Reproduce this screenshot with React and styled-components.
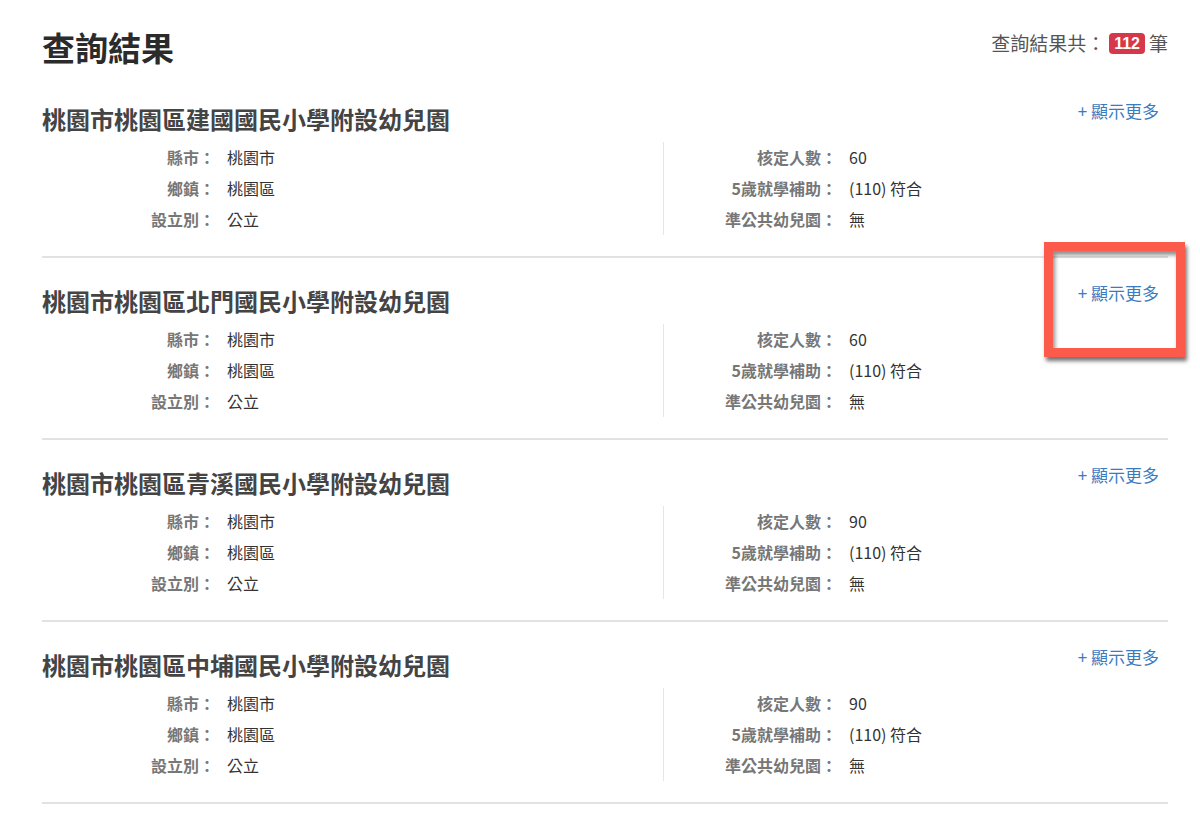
import React from "react";
import styled, { createGlobalStyle } from "styled-components";

const GlobalStyle = createGlobalStyle`
  html, body {
    margin: 0;
    padding: 0;
    background: #fff;
  }
  body {
    font-family: "Noto Sans CJK TC", "Noto Sans", "Liberation Sans", sans-serif;
    color: #333;
  }
`;

const Page = styled.div`
  padding: 0 32px 0 42px;
`;

const Header = styled.header`
  display: flex;
  justify-content: space-between;
  align-items: flex-start;
  padding: 25px 0 7px;
`;

const Heading = styled.h1`
  margin: 0;
  font-size: 33px;
  line-height: 44px;
  font-weight: 700;
  color: #2b2b2b;
`;

const Count = styled.div`
  display: flex;
  align-items: center;
  margin-top: 6px;
  font-size: 19px;
  line-height: 24px;
  color: #555;
`;

const Badge = styled.span`
  display: inline-block;
  margin: 0 4px;
  padding: 0 5px;
  height: 21px;
  line-height: 21px;
  border-radius: 4px;
  background: #d7374a;
  color: #fff;
  font-family: "Liberation Sans", Arial, sans-serif;
  font-size: 16px;
  font-weight: 700;
`;

const Card = styled.section`
  position: relative;
  padding: 25px 0 21px;
  border-bottom: 2px solid #e2e2e2;
`;

const CardHead = styled.div`
  display: flex;
  justify-content: space-between;
  align-items: flex-start;
`;

const Title = styled.h2`
  margin: 0;
  font-size: 24px;
  line-height: 36px;
  font-weight: 700;
  color: #444;
`;

const MoreLink = styled.a`
  margin: -2px 9px 0 0;
  font-size: 17px;
  line-height: 24px;
  color: #3a7bc0;
  text-decoration: none;
  cursor: pointer;
`;

const Body = styled.div`
  display: grid;
  grid-template-columns: 621px 1fr;
  margin-top: 5px;
`;

const Column = styled.div`
  border-left: ${(p) => (p.$divided ? "1px solid #e6e6e6" : "none")};
`;

const Row = styled.div`
  display: grid;
  grid-template-columns: 173px 1fr;
  column-gap: 12px;
  font-size: 16px;
  line-height: 31px;
`;

const Label = styled.span`
  text-align: right;
  color: #777;
  font-weight: 700;
`;

const Value = styled.span`
  color: #333;
`;

const Highlight = styled.div`
  position: absolute;
  top: -16px;
  right: -17px;
  width: 141px;
  height: 115px;
  box-sizing: border-box;
  border: 9px solid #fc5a4b;
  box-shadow: 2px 4px 4px rgba(0, 0, 0, 0.55),
    inset 2px 4px 4px rgba(0, 0, 0, 0.45);
  pointer-events: none;
`;

const schools = [
  { name: "桃園市桃園區建國國民小學附設幼兒園", quota: 60 },
  { name: "桃園市桃園區北門國民小學附設幼兒園", quota: 60, marked: true },
  { name: "桃園市桃園區青溪國民小學附設幼兒園", quota: 90 },
  { name: "桃園市桃園區中埔國民小學附設幼兒園", quota: 90 },
];

const InfoRows = ({ items }) =>
  items.map(([label, value]) => (
    <Row key={label}>
      <Label>{label}：</Label>
      <Value>{value}</Value>
    </Row>
  ));

const SchoolCard = ({ school }) => (
  <Card>
    <CardHead>
      <Title>{school.name}</Title>
      <MoreLink>+ 顯示更多</MoreLink>
    </CardHead>
    <Body>
      <Column>
        <InfoRows
          items={[
            ["縣市", "桃園市"],
            ["鄉鎮", "桃園區"],
            ["設立別", "公立"],
          ]}
        />
      </Column>
      <Column $divided>
        <InfoRows
          items={[
            ["核定人數", school.quota],
            ["5歲就學補助", "(110) 符合"],
            ["準公共幼兒園", "無"],
          ]}
        />
      </Column>
    </Body>
    {school.marked ? <Highlight /> : null}
  </Card>
);

const App = () => (
  <>
    <GlobalStyle />
    <Page>
      <Header>
        <Heading>查詢結果</Heading>
        <Count>
          查詢結果共：<Badge>112</Badge>筆
        </Count>
      </Header>
      {schools.map((school) => (
        <SchoolCard key={school.name} school={school} />
      ))}
    </Page>
  </>
);

export default App;
